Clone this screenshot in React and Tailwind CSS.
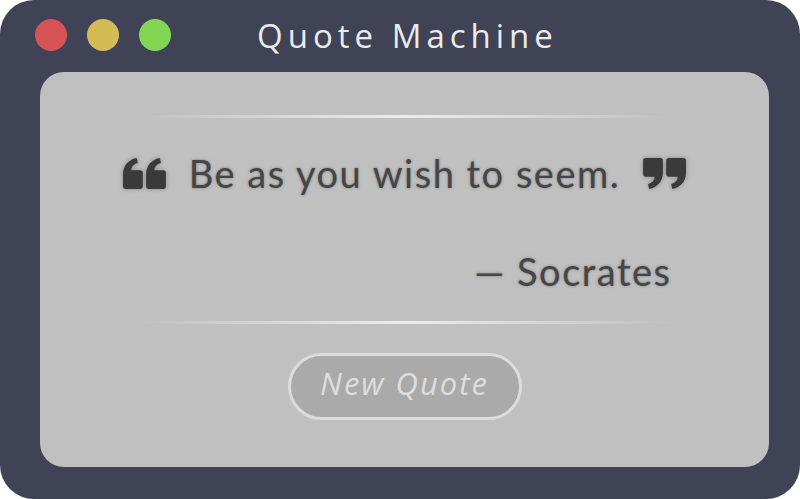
import React from 'react';

function QuoteMark({ flip }) {
  // two "6" shaped marks, rotated for the closing quote
  const mark = 'M0 15 C0 7 5 1.5 12.5 0 L13.5 4.5 C9.5 5.5 7.5 8 7.5 11 L15.5 11 Q18 11 18 13.5 L18 25.5 Q18 28 15.5 28 L2.5 28 Q0 28 0 25.5 Z';
  return (
    <svg
      width="44"
      height="33"
      viewBox="0 0 40 28"
      className={`shrink-0 ${flip ? 'rotate-180' : ''}`}
      style={{ filter: 'drop-shadow(0 0 2px rgba(60,60,60,0.45))' }}
    >
      <g fill="#3a3a3a">
        <path d={mark} />
        <path d={mark} transform="translate(21 0)" />
      </g>
    </svg>
  );
}

function Divider() {
  return (
    <div className="w-[540px] h-[3px] mx-auto bg-[linear-gradient(90deg,rgba(235,235,235,0)_0%,#ececec_50%,rgba(235,235,235,0)_100%)]" />
  );
}

export default function App() {
  return (
    <div className="w-[800px] h-[499px] bg-white">
      <div className="w-full h-full rounded-[34px] bg-[#404355] flex flex-col">
        {/* barra de título */}
        <div className="h-[72px] shrink-0 flex items-center pl-[35px] pr-[161px] pb-[2px]">
          <div className="flex gap-[20px] shrink-0">
            <span className="w-[32px] h-[32px] rounded-full bg-[#d75254]" />
            <span className="w-[32px] h-[32px] rounded-full bg-[#d5bb54]" />
            <span className="w-[32px] h-[32px] rounded-full bg-[#82d654]" />
          </div>
          <h1 className="flex-1 text-center text-[33px] leading-none tracking-[5px] pl-[5px] text-[#ebebeb] font-['Open_Sans',sans-serif]">
            Quote Machine
          </h1>
        </div>

        {/* tarjeta */}
        <div className="ml-[40px] mr-[31px] mb-[32px] flex-1 rounded-[24px] bg-[#c0c0c0] flex flex-col pt-[43px]">
          <Divider />

          <div className="mt-[33px] flex items-center justify-center gap-[22px] text-[#454545] font-['Lato',sans-serif] [text-shadow:0_0_3px_rgba(60,60,60,0.5)]">
            <QuoteMark />
            <p className="text-[38px] leading-[44px] tracking-[1.5px]">Be as you wish to seem.</p>
            <QuoteMark flip />
          </div>

          <div className="w-[540px] mx-auto mt-[54px] text-right pr-[3px] text-[38px] leading-[44px] tracking-[1.5px] text-[#454545] font-['Lato',sans-serif] [text-shadow:0_0_3px_rgba(60,60,60,0.5)]">
            — Socrates
          </div>

          <div className="mt-[28px]">
            <Divider />
          </div>

          <div className="mt-[29px] flex justify-center">
            <button className="w-[234px] h-[67px] pb-[6px] rounded-full border-[3px] border-[#dcdcdc] bg-[#aaaaaa] text-[#dedede] italic text-[31px] tracking-[2px] font-['Open_Sans',sans-serif] flex items-center justify-center">
              New Quote
            </button>
          </div>
        </div>
      </div>
    </div>
  );
}
